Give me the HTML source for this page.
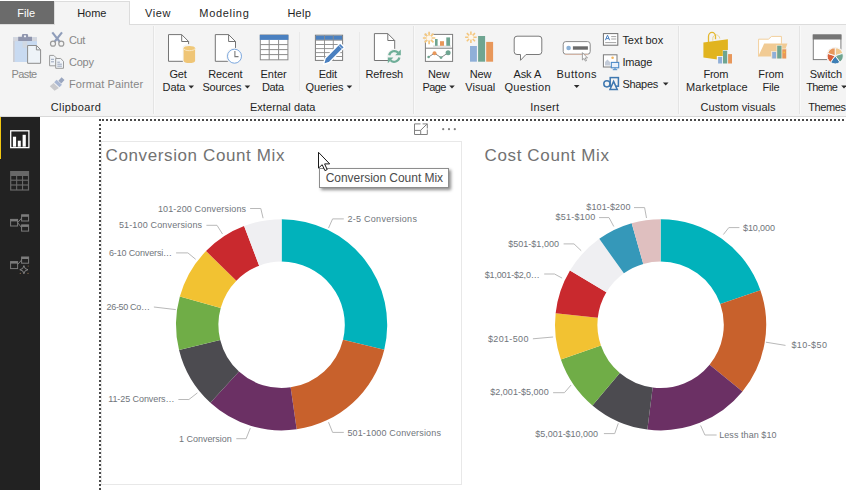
<!DOCTYPE html>
<html><head><meta charset="utf-8"><title>Power BI Desktop</title>
<style>
html,body{margin:0;padding:0;}
body{width:846px;height:490px;overflow:hidden;position:relative;background:#fff;font-family:"Liberation Sans", sans-serif;}
.t{position:absolute;white-space:nowrap;line-height:1;}
.abs{position:absolute;}
#tabbar{left:0;top:0;width:846px;height:24px;background:#fff;}
#ribbon{left:0;top:24px;width:846px;height:93px;background:#f4f4f4;border-top:1px solid #dcdcdc;border-bottom:1px solid #d9d9d9;box-sizing:border-box;}
#filetab{left:0;top:1px;width:54px;height:23px;background:#6b6b6b;}
#hometab{left:54px;top:1px;width:76px;height:24px;background:#f4f4f4;border:1px solid #dcdcdc;border-bottom:none;box-sizing:border-box;}
#side{left:0;top:117px;width:40px;height:373px;background:#222222;}
#sidesel{left:0;top:117px;width:1.2px;height:42px;background:#f2c811;}
.vsep{width:1px;background:#e3e3e3;}
svg{position:absolute;left:0;top:0;overflow:visible;}
svg text{font-family:"Liberation Sans", sans-serif;}
</style></head><body>
<div class="abs" id="tabbar"></div>
<div class="abs" id="ribbon"></div>
<div class="abs" id="filetab"></div>
<div class="abs" id="hometab"></div>
<div class="abs vsep" style="left:153px;top:26px;height:88px;background:#e4e4e4"></div>
<div class="abs vsep" style="left:154px;top:26px;height:88px;background:#f9f9f9"></div>
<div class="abs vsep" style="left:413px;top:26px;height:88px;background:#e4e4e4"></div>
<div class="abs vsep" style="left:414px;top:26px;height:88px;background:#f9f9f9"></div>
<div class="abs vsep" style="left:678px;top:26px;height:88px;background:#e4e4e4"></div>
<div class="abs vsep" style="left:679px;top:26px;height:88px;background:#f9f9f9"></div>
<div class="abs vsep" style="left:799px;top:26px;height:88px;background:#e4e4e4"></div>
<div class="abs vsep" style="left:800px;top:26px;height:88px;background:#f9f9f9"></div>
<div class="abs vsep" style="left:299px;top:32px;height:59px;background:#e9e9e9"></div>
<div class="abs vsep" style="left:359px;top:32px;height:59px;background:#e9e9e9"></div>
<div class="abs" id="side"></div>
<div class="abs" id="sidesel"></div>
<svg width="846" height="490" viewBox="0 0 846 490">
<!-- dotted selection guides -->
<rect x="99" y="119" width="2" height="2" fill="#4a4a4a"/>
<line x1="102" y1="120" x2="846" y2="120" stroke="#4a4a4a" stroke-width="2" stroke-dasharray="2 2"/>
<line x1="100" y1="124" x2="100" y2="490" stroke="#4a4a4a" stroke-width="2" stroke-dasharray="2 2"/>
<!-- visual border -->
<rect x="101.5" y="141.5" width="360" height="343" fill="none" stroke="#e8e8e8"/>
<path d="M281.60,219.20A105.6,105.6 0 0 1 384.24,349.63L343.03,339.66A63.2,63.2 0 0 0 281.60,261.60Z" fill="#01b2bb"/>
<path d="M384.24,349.63A105.6,105.6 0 0 1 296.66,429.32L290.61,387.35A63.2,63.2 0 0 0 343.03,339.66Z" fill="#c8612c"/>
<path d="M296.66,429.32A105.6,105.6 0 0 1 210.39,402.78L238.98,371.47A63.2,63.2 0 0 0 290.61,387.35Z" fill="#6b3064"/>
<path d="M210.39,402.78A105.6,105.6 0 0 1 179.05,349.99L220.22,339.88A63.2,63.2 0 0 0 238.98,371.47Z" fill="#4c4b50"/>
<path d="M179.05,349.99A105.6,105.6 0 0 1 179.84,296.58L220.70,307.91A63.2,63.2 0 0 0 220.22,339.88Z" fill="#70ad47"/>
<path d="M179.84,296.58A105.6,105.6 0 0 1 206.02,251.05L236.37,280.66A63.2,63.2 0 0 0 220.70,307.91Z" fill="#f2c232"/>
<path d="M206.02,251.05A105.6,105.6 0 0 1 244.10,226.08L259.16,265.72A63.2,63.2 0 0 0 236.37,280.66Z" fill="#c9292e"/>
<path d="M244.10,226.08A105.6,105.6 0 0 1 281.60,219.20L281.60,261.60A63.2,63.2 0 0 0 259.16,265.72Z" fill="#efeff2"/>

<path d="M660.60,219.20A105.6,105.6 0 0 1 760.39,290.25L720.32,304.12A63.2,63.2 0 0 0 660.60,261.60Z" fill="#01b2bb"/>
<path d="M760.39,290.25A105.6,105.6 0 0 1 742.43,391.54L709.58,364.74A63.2,63.2 0 0 0 720.32,304.12Z" fill="#c8612c"/>
<path d="M742.43,391.54A105.6,105.6 0 0 1 647.36,429.57L652.68,387.50A63.2,63.2 0 0 0 709.58,364.74Z" fill="#6b3064"/>
<path d="M647.36,429.57A105.6,105.6 0 0 1 592.44,405.46L619.81,373.07A63.2,63.2 0 0 0 652.68,387.50Z" fill="#4c4b50"/>
<path d="M592.44,405.46A105.6,105.6 0 0 1 560.87,359.53L600.92,345.58A63.2,63.2 0 0 0 619.81,373.07Z" fill="#70ad47"/>
<path d="M560.87,359.53A105.6,105.6 0 0 1 555.64,313.21L597.78,317.86A63.2,63.2 0 0 0 600.92,345.58Z" fill="#f2c232"/>
<path d="M555.64,313.21A105.6,105.6 0 0 1 569.99,270.57L606.37,292.34A63.2,63.2 0 0 0 597.78,317.86Z" fill="#c9292e"/>
<path d="M569.99,270.57A105.6,105.6 0 0 1 599.28,238.83L623.90,273.35A63.2,63.2 0 0 0 606.37,292.34Z" fill="#efeff2"/>
<path d="M599.28,238.83A105.6,105.6 0 0 1 631.67,223.24L643.29,264.02A63.2,63.2 0 0 0 623.90,273.35Z" fill="#3598b9"/>
<path d="M631.67,223.24A105.6,105.6 0 0 1 660.60,219.20L660.60,261.60A63.2,63.2 0 0 0 643.29,264.02Z" fill="#dfbfbf"/>

<g fill="none" stroke="#b9b9b9" stroke-width="1">
<polyline points="328.5,228.1 332.6,218.9 343.8,218.9"/>
<polyline points="328.5,422.2 332.6,432.4 343.8,432.4"/>
<polyline points="250.3,428.2 246.1,438.7 236.3,438.7"/>
<polyline points="197.4,392.9 188.9,399.5 178.4,399.5"/>
<polyline points="175.8,309.6 153.9,307"/>
<polyline points="195.7,259.3 187.9,252.9 176.1,252.9"/>
<polyline points="222.5,234 217,225.3 206.4,225.3"/>
<polyline points="263.1,218.2 260.8,208.5 250.1,208.5"/>

<polyline points="723.4,234.5 728.8,227.6 739.4,227.6"/>
<polyline points="765.9,342.2 785.5,345.4"/>
<polyline points="700.6,425.5 704.9,435 716.6,435"/>
<polyline points="618.3,423.3 614.7,433.6 603.9,433.6"/>
<polyline points="571.1,385 564.4,392.7 553.1,392.7"/>
<polyline points="553.1,337 532.9,338.8"/>
<polyline points="562.1,278.1 554.5,274 544.2,274"/>
<polyline points="581.2,250.7 574,243.9 563.6,243.9"/>
<polyline points="613.8,226.5 609,217.6 599,217.6"/>
<polyline points="646.5,218 644.6,207.6 634,207.6"/>

</g>
<g font-size="9px" fill="#6f6f6f" letter-spacing="0.3">


</g>
<!-- ===== Ribbon icons ===== -->
<g id="ic-paste">
  <rect x="13" y="37.2" width="24" height="24.8" fill="#c8daf1"/>
  <rect x="13" y="37.2" width="24" height="4" fill="#d3d6de"/>
  <rect x="13" y="41" width="1.7" height="21" fill="#cdced3"/>
  <rect x="22.6" y="41.2" width="4.6" height="6.6" fill="#d3d7df" opacity=".8"/>
  <path d="M18.2,36.8h3.7v-1.6q0-1.3 1.3-1.3h3.6q1.3,0 1.3,1.3v1.6h3.9v4.2h-13.8z" fill="#8f95ad"/>
  <circle cx="25" cy="36.3" r="1.1" fill="#f4f6fa"/>
  <path d="M27.6,45.5h9l4,4.2v13.6h-13z" fill="#eef3f8" stroke="#8c8c8c" stroke-width="1"/>
  <path d="M36.4,45.7v4.2h4" fill="none" stroke="#8c8c8c" stroke-width="1"/>
</g>
<g id="ic-cut" fill="none">
  <path d="M52.3,32.4L59.9,42" stroke="#8f9dba" stroke-width="2.1"/>
  <path d="M62,32.4L54.4,42" stroke="#8f9dba" stroke-width="2.1"/>
  <circle cx="53" cy="43.7" r="2.5" stroke="#9a9a9a" stroke-width="1.2"/>
  <circle cx="61.3" cy="43.7" r="2.5" stroke="#9a9a9a" stroke-width="1.2"/>
</g>
<g id="ic-copy" fill="#f1f4f8" stroke="#9b9b9b" stroke-width="1">
  <path d="M49.6,55.4h4.2l2.4,2.4v8h-6.6z"/>
  <path d="M55.7,58.5h5l2.8,2.8v7h-7.8z"/>
  <path d="M51,59.3h3M51,61.8h3M57.3,62.2h2.6M57.3,64.2h4.6M57.3,66.2h4.6" stroke="#9aa5bb" fill="none"/>
</g>
<g id="ic-fmt">
  <path d="M61.6,77.3l2.9,2.7l-3.2,3.4l-2.9,-2.7z" fill="#9aa6bf"/>
  <path d="M56.6,79.8l5.3,5l-2.4,2.5l-5.3,-5z" fill="#a9b7d3"/>
  <path d="M53.6,82.9l5.3,5l-4.3,2.8l-4.8,-4.4z" fill="#c9c9cc"/>
</g>
<g id="ic-getdata">
  <path d="M168.5,34.6h13.2l6.9,6.9v19.8h-20.1z" fill="#fff" stroke="#747474" stroke-width="1"/>
  <path d="M181.7,34.6v6.9h6.9" fill="none" stroke="#747474" stroke-width="1"/>
  <path d="M182.6,47.4v13.6a6.75,3.3 0 0 0 13.5,0v-13.6a6.75,3.3 0 0 0 -13.5,0z" fill="#f4f4f4"/>
  <path d="M183.6,48.2v12.6a5.75,2.3 0 0 0 11.5,0v-12.6z" fill="#efc576"/>
  <ellipse cx="189.35" cy="48.2" rx="5.75" ry="2.3" fill="#f0c878"/>
  <path d="M183.6,48.4a5.75,2.3 0 0 0 11.5,0" fill="none" stroke="#fbebc9" stroke-width=".9"/>
</g>
<g id="ic-recent">
  <path d="M215.3,34.6h13.3l6.9,6.9v19.8h-20.2z" fill="#fff" stroke="#747474" stroke-width="1"/>
  <path d="M228.6,34.6v6.9h6.9" fill="none" stroke="#747474" stroke-width="1"/>
  <circle cx="234.5" cy="56.2" r="8.5" fill="#f4f4f4"/>
  <circle cx="234.5" cy="56.2" r="7" fill="#fff" stroke="#7ba7de" stroke-width="1"/>
  <path d="M234.9,51v5.6h3.6" fill="none" stroke="#7a7a7a" stroke-width="1.1"/>
</g>
<g id="ic-enter">
  <rect x="260.3" y="35" width="27.6" height="24.8" fill="#fff" stroke="#8a8a8a" stroke-width="1"/>
  <path d="M269.2,40v19.8M278.6,40v19.8M260.3,44.6h27.6M260.3,49.6h27.6M260.3,54.6h27.6" stroke="#8a8a8a" stroke-width="1" fill="none"/>
  <rect x="259.8" y="34.9" width="28.6" height="5" fill="#4a80c0"/>
</g>
<g id="ic-edit">
  <rect x="315.4" y="35.2" width="27.2" height="25.2" fill="#fff" stroke="#7b7b7b" stroke-width="1"/>
  <rect x="315.9" y="35.7" width="26.2" height="4.2" fill="#4a80c0"/>
  <path d="M324.5,35.2v25.2M333.3,35.2v25.2M315.4,40.2h27.2M315.4,44.5h27.2M315.4,48.6h27.2M315.4,52.6h27.2M315.4,56.5h27.2" stroke="#8a8a8a" stroke-width=".9" fill="none"/>
  <path d="M340.1,42.9l4.4,4.4l-15.2,15.2l-5.8,1.8l1.6,-6z" fill="#4a80c0" stroke="#fff" stroke-width="1.4" stroke-linejoin="round"/>
  <path d="M338.2,44.9l4.3,4.3" stroke="#dfe8f5" stroke-width=".8"/>
</g>
<g id="ic-refresh">
  <path d="M374.4,33.6h13.4l6.9,6.9v20h-20.3z" fill="#fff" stroke="#747474" stroke-width="1"/>
  <path d="M387.8,33.6v6.9h6.9" fill="none" stroke="#747474" stroke-width="1"/>
  <circle cx="394.3" cy="56.4" r="7.6" fill="#f4f4f4"/>
  <path d="M389.2,55.2a5.3,5.3 0 0 1 8.9,-2.6" fill="none" stroke="#6fae98" stroke-width="2.2"/>
  <path d="M399.4,57.6a5.3,5.3 0 0 1 -8.9,2.6" fill="none" stroke="#6fae98" stroke-width="2.2"/>
  <path d="M400.8,49.6v5.6h-5.6z" fill="#6fae98"/>
  <path d="M387.8,63.2v-5.6h5.6z" fill="#6fae98"/>
</g>
<g id="ic-newpage">
  <rect x="425.4" y="34.4" width="27.2" height="27" fill="#fff" stroke="#7d7d7d" stroke-width="1"/>
  <path d="M425.4,48.2h27.2" stroke="#7d7d7d" stroke-width="1"/>
  <path d="M433,46.1h18" stroke="#b5b5b5" stroke-width=".6"/>
  <rect x="435" y="39" width="2.6" height="6.8" fill="#6fa591"/>
  <rect x="440" y="41.2" width="4" height="4.6" fill="#e8975a"/>
  <rect x="446.3" y="37.4" width="3.8" height="8.4" fill="#6fa591"/>
  <path d="M428.6,57l5.9,-3.8l6.5,4.4l7.1,-4.8" fill="none" stroke="#8a8a8a" stroke-width="1"/>
  <circle cx="428.6" cy="57" r="1.3" fill="#6fa591"/>
  <circle cx="434.5" cy="53.2" r="2" fill="#e8975a"/>
  <circle cx="441" cy="57.6" r="1.4" fill="#6fa591"/>
  <circle cx="448.1" cy="52.8" r="2.5" fill="#6fa591"/>
  <g transform="translate(429.1 38)"><circle r="4.6" fill="#f4f4f4"/><g stroke="#f4c77f" stroke-width="1.7"><path d="M0,-6.2V6.2M-6.2,0H6.2M-4.4,-4.4L4.4,4.4M-4.4,4.4L4.4,-4.4"/></g><circle r="2.6" fill="#fdf6ea"/></g>
</g>
<g id="ic-newvisual">
  <rect x="470" y="46" width="6.9" height="15.7" fill="#8fafd8"/>
  <rect x="478.1" y="36" width="7" height="25.7" fill="#6fa591"/>
  <rect x="486.2" y="41.9" width="6.9" height="19.8" fill="#e8975a"/>
  <g transform="translate(470.9 37.2)"><g stroke="#f4c77f" stroke-width="1.6"><path d="M0,-5.8V5.8M-5.8,0H5.8M-4.1,-4.1L4.1,4.1M-4.1,4.1L4.1,-4.1"/></g><circle r="2.5" fill="#fdf6ea"/></g>
</g>
<g id="ic-ask">
  <path d="M517,36.2h22a2.8,2.8 0 0 1 2.8,2.8v12.7a2.8,2.8 0 0 1 -2.8,2.8h-13l-5.5,5.8v-5.8h-3.5a2.8,2.8 0 0 1 -2.8,-2.8v-12.7a2.8,2.8 0 0 1 2.8,-2.8z" fill="#fff" stroke="#7a7a7a" stroke-width="1"/>
</g>
<g id="ic-buttons">
  <rect x="563.2" y="41.6" width="27" height="12.6" rx="2.6" fill="#fff" stroke="#8a8a8a" stroke-width="1"/>
  <path d="M565,54.4h23" stroke="#e9b9a0" stroke-width=".7"/>
  <circle cx="568.6" cy="48" r="2.3" fill="#8ab0d6"/>
  <rect x="572.9" y="46.3" width="15" height="3.4" fill="#6b6b6b"/>
  <path d="M582.4,52.6v7.4l1.7,-1.6l1.3,2.7l1.1,-.5l-1.3,-2.7h2.3z" fill="#fff" stroke="#8a8a8a" stroke-width=".8"/>
  <path d="M573.9,85h5.6l-2.8,3z" fill="#2b2b2b"/>
</g>
<g id="ic-textbox">
  <rect x="603.4" y="33.6" width="14.4" height="11.6" fill="#fff" stroke="#707070" stroke-width="1"/>
  <path d="M605.4,40.2l2.1,-5l2.1,5M606.2,38.6h2.7" fill="none" stroke="#4a80c0" stroke-width="1"/>
  <path d="M611.2,36.6h5M611.2,39h5M605.2,42.6h11" stroke="#9a9a9a" stroke-width=".9"/>
</g>
<g id="ic-image">
  <rect x="603.4" y="54.8" width="13.6" height="12.2" fill="#fff" stroke="#7a7a7a" stroke-width="1"/>
  <path d="M605,65.6v-3.6l2.4,-2.6l2.6,2.6v3.6z" fill="#c3cbd8"/>
  <circle cx="612.6" cy="57.8" r="1.3" fill="#f3b35a"/>
  <rect x="611.3" y="62.4" width="7.4" height="5.4" fill="#e8f1fb" stroke="#4a8ac8" stroke-width="1.1"/>
  <path d="M615,67.8v1.6M612.8,69.7h4.4" stroke="#4a8ac8" stroke-width="1"/>
</g>
<g id="ic-shapes" fill="none" stroke="#3f78b0" stroke-width="1.5">
  <rect x="610.2" y="77.6" width="8.2" height="8.6" fill="#f4f4f4"/>
  <circle cx="606.9" cy="83.8" r="3.1"/>
  <path d="M613.6,81.4l3.6,8h-7.2z" fill="#f4f4f4"/>
  <path d="M662.9,82.6h5.6l-2.8,3z" fill="#2b2b2b" stroke="none"/>
</g>
<g id="ic-market">
  <path d="M712.8,40.6v-2.4c.2,-3.6 4.8,-4.6 6.6,-1.2l.4,1.6" fill="none" stroke="#ecd690" stroke-width="1"/>
  <path d="M708.5,42v-5.4a3.5,4.2 0 0 1 7,0v2.6" fill="none" stroke="#e4b830" stroke-width="1.3"/>
  <path d="M703.4,42.5l24.5,-3.2v21.7l-24.5,-3.6z" fill="#e1b41f"/>
  <path d="M716.8,63.6v-7.6h6v-6h6v3.4h4.2v10.2z" fill="#f4f4f4"/>
  <rect x="718.1" y="56.9" width="4" height="6.6" fill="#8fafd8"/>
  <rect x="723" y="50.7" width="4.2" height="12.8" fill="#6fa591"/>
  <rect x="728.1" y="54.1" width="3.9" height="9.4" fill="#e8975a"/>
</g>
<g id="ic-fromfile">
  <path d="M758.6,56.4v-17.2h9.8l3.2,-2.8h9.8v7.4" fill="#fff" stroke="#f2cf9c" stroke-width="1"/>
  <path d="M758.2,56.6l6,-13h23.2l-4.4,13z" fill="#f1cb94"/>
  <path d="M771,58.6v-7.6h5.4v-6h5.8v3.4h4.6v10.2z" fill="#f6e6cf"/>
  <rect x="772.2" y="51.9" width="3.9" height="6.6" fill="#8fafd8"/>
  <rect x="777.2" y="45.7" width="4.3" height="12.8" fill="#6fa591"/>
  <rect x="782.3" y="49.3" width="3.8" height="9.2" fill="#e8975a"/>
  <rect x="783.4" y="51.6" width="1.6" height="1.6" fill="#f6c33c"/>
</g>
<g id="ic-theme">
  <rect x="813.3" y="35" width="27.6" height="24.6" fill="#fff" stroke="#7d7d7d" stroke-width="1"/>
  <rect x="812.8" y="34.5" width="28.6" height="5" fill="#757575"/>
  <circle cx="835.2" cy="55.8" r="9" fill="#f8f8f8"/>
  <g transform="translate(835.2 55.8)" stroke="#f8f8f8" stroke-width="1">
    <path d="M0,0L0,-8A8,8 0 0 1 7.61,-2.47Z" fill="#f0c88f"/>
    <path d="M0,0L7.61,-2.47A8,8 0 0 1 4.7,6.47Z" fill="#6fa591"/>
    <path d="M0,0L4.7,6.47A8,8 0 0 1 -4.7,6.47Z" fill="#3f7fb5"/>
    <path d="M0,0L-4.7,6.47A8,8 0 0 1 -7.61,-2.47Z" fill="#d9603a"/>
    <path d="M0,0L-7.61,-2.47A8,8 0 0 1 0,-8Z" fill="#e8975a"/>
  </g>
</g>
<!-- dropdown arrows beside text -->
<g fill="#2b2b2b">
  <path d="M188.4,85.5h5.6l-2.8,3z"/>
  <path d="M244.6,85.5h5.6l-2.8,3z"/>
  <path d="M346.6,85.5h5.6l-2.8,3z"/>
  <path d="M449.2,85.5h5.6l-2.8,3z"/>
  <path d="M841.2,85.5h5.6l-2.8,3z"/>
</g>
<!-- ===== Sidebar icons ===== -->
<g id="sb-report">
  <rect x="10.7" y="130.8" width="18.2" height="16.8" fill="none" stroke="#fff" stroke-width="1.3"/>
  <rect x="12.9" y="136.7" width="3.2" height="10" fill="#fff"/>
  <rect x="17.8" y="140.7" width="3" height="6" fill="#fff"/>
  <rect x="22.6" y="134.8" width="3.2" height="11.9" fill="#fff"/>
</g>
<g id="sb-data">
  <rect x="10.1" y="171" width="19" height="19.6" fill="#686868"/>
  <g fill="#222">
   <rect x="11.3" y="176" width="4.8" height="3.6"/><rect x="17.2" y="176" width="4.8" height="3.6"/><rect x="23.1" y="176" width="4.8" height="3.6"/>
   <rect x="11.3" y="180.8" width="4.8" height="3.6"/><rect x="17.2" y="180.8" width="4.8" height="3.6"/><rect x="23.1" y="180.8" width="4.8" height="3.6"/>
   <rect x="11.3" y="185.6" width="4.8" height="3.8"/><rect x="17.2" y="185.6" width="4.8" height="3.8"/><rect x="23.1" y="185.6" width="4.8" height="3.8"/>
  </g>
</g>
<g id="sb-model" fill="none" stroke="#7c7c7c" stroke-width="1">
  <rect x="10.6" y="219.4" width="7" height="6.6"/><path d="M10.6,220.4h7" stroke-width="2"/>
  <rect x="21.6" y="214.8" width="7" height="6.2"/><path d="M21.6,215.8h7" stroke-width="2"/>
  <rect x="21.6" y="224.9" width="7" height="6.2"/><path d="M21.6,225.9h7" stroke-width="2"/>
  <path d="M17.6,222.7l4,-4.6M17.6,222.7l4,4.8"/>
</g>
<g id="sb-model2" fill="none" stroke="#7c7c7c" stroke-width="1">
  <rect x="10.6" y="261.6" width="7" height="7"/><path d="M10.6,262.6h7" stroke-width="2"/>
  <rect x="21.6" y="257" width="7" height="6.2"/><path d="M21.6,258h7" stroke-width="2"/>
  <path d="M17.6,264.6l4,-4.6"/>
  <path d="M23.9,265.6l1.2,2.9l2.9,1.2l-2.9,1.2l-1.2,2.9l-1.2,-2.9l-2.9,-1.2l2.9,-1.2z" stroke="#8a8a8a" stroke-width=".9"/>
  <g fill="#8a6a4a" stroke="none"><circle cx="20.3" cy="273.4" r=".6"/><circle cx="28" cy="273.4" r=".6"/><circle cx="28.2" cy="266" r=".6"/></g>
</g>
<!-- ===== Canvas bits ===== -->
<g id="focus" fill="none" stroke="#808080" stroke-width="1">
  <path d="M420.5,123.9h-6v10.6h12.8v-5"/>
  <path d="M414.5,130.4h6.2v4.1"/>
  <path d="M420.6,130.3l6.6,-6.4M422.6,123.9h4.7v4.6"/>
</g>
<g fill="#808080"><circle cx="443.2" cy="129.2" r="1.1"/><circle cx="449" cy="129.2" r="1.1"/><circle cx="454.8" cy="129.2" r="1.1"/></g>

</svg>
<div class="abs" style="left:319px;top:168px;width:130px;height:20px;box-sizing:border-box;border:1px solid #8d8d8d;background:#fff;box-shadow:2px 2px 3px rgba(0,0,0,.45);"></div>
<span class="t" id="t0" style="left:17.2px;top:8.29px;font-size:11px;color:#ffffff;letter-spacing:0.055px;">File</span>
<span class="t" id="t1" style="left:77.2px;top:8.29px;font-size:11px;color:#1f1f1f;letter-spacing:-0.015px;">Home</span>
<span class="t" id="t2" style="left:145px;top:8.29px;font-size:11px;color:#1f1f1f;letter-spacing:0.581px;">View</span>
<span class="t" id="t3" style="left:199.3px;top:8.29px;font-size:11px;color:#1f1f1f;letter-spacing:0.694px;">Modeling</span>
<span class="t" id="t4" style="left:287.4px;top:8.29px;font-size:11px;color:#1f1f1f;letter-spacing:0.258px;">Help</span>
<span class="t" id="t5" style="left:11.6px;top:69.09px;font-size:11px;color:#878787;letter-spacing:-0.635px;">Paste</span>
<span class="t" id="t6" style="left:68.9px;top:35.29px;font-size:11px;color:#878787;letter-spacing:-0.363px;">Cut</span>
<span class="t" id="t7" style="left:68.9px;top:57.09px;font-size:11px;color:#878787;letter-spacing:-0.196px;">Copy</span>
<span class="t" id="t8" style="left:68.9px;top:79.09px;font-size:11px;color:#878787;letter-spacing:0.112px;">Format Painter</span>
<span class="t" id="t9" style="left:50.8px;top:101.79px;font-size:11px;color:#1f1f1f;letter-spacing:0.376px;">Clipboard</span>
<span class="t" id="t10" style="left:169.4px;top:69.29px;font-size:11px;color:#1f1f1f;letter-spacing:-0.117px;">Get</span>
<span class="t" id="t11" style="left:162.6px;top:82.09px;font-size:11px;color:#1f1f1f;letter-spacing:-0.117px;">Data</span>
<span class="t" id="t12" style="left:208.2px;top:69.29px;font-size:11px;color:#1f1f1f;letter-spacing:-0.072px;">Recent</span>
<span class="t" id="t13" style="left:202.4px;top:82.09px;font-size:11px;color:#1f1f1f;letter-spacing:-0.210px;">Sources</span>
<span class="t" id="t14" style="left:260.5px;top:69.29px;font-size:11px;color:#1f1f1f;letter-spacing:-0.024px;">Enter</span>
<span class="t" id="t15" style="left:261.9px;top:82.09px;font-size:11px;color:#1f1f1f;letter-spacing:-0.317px;">Data</span>
<span class="t" id="t16" style="left:318.7px;top:69.29px;font-size:11px;color:#1f1f1f;letter-spacing:-0.190px;">Edit</span>
<span class="t" id="t17" style="left:305.5px;top:82.09px;font-size:11px;color:#1f1f1f;letter-spacing:-0.089px;">Queries</span>
<span class="t" id="t18" style="left:365.6px;top:69.29px;font-size:11px;color:#1f1f1f;letter-spacing:-0.172px;">Refresh</span>
<span class="t" id="t19" style="left:249.9px;top:101.79px;font-size:11px;color:#1f1f1f;letter-spacing:0.064px;">External data</span>
<span class="t" id="t20" style="left:428px;top:69.29px;font-size:11px;color:#1f1f1f;letter-spacing:-0.108px;">New</span>
<span class="t" id="t21" style="left:422.6px;top:82.09px;font-size:11px;color:#1f1f1f;letter-spacing:-0.601px;">Page</span>
<span class="t" id="t22" style="left:469.7px;top:69.29px;font-size:11px;color:#1f1f1f;letter-spacing:-0.108px;">New</span>
<span class="t" id="t23" style="left:465.3px;top:82.09px;font-size:11px;color:#1f1f1f;letter-spacing:0.047px;">Visual</span>
<span class="t" id="t24" style="left:513.4px;top:69.29px;font-size:11px;color:#1f1f1f;letter-spacing:-0.056px;">Ask A</span>
<span class="t" id="t25" style="left:504.5px;top:82.09px;font-size:11px;color:#1f1f1f;letter-spacing:0.296px;">Question</span>
<span class="t" id="t26" style="left:556.5px;top:69.29px;font-size:11px;color:#1f1f1f;letter-spacing:0.465px;">Buttons</span>
<span class="t" id="t27" style="left:622.4px;top:35.29px;font-size:11px;color:#1f1f1f;letter-spacing:-0.024px;">Text box</span>
<span class="t" id="t28" style="left:622.4px;top:57.09px;font-size:11px;color:#1f1f1f;letter-spacing:-0.120px;">Image</span>
<span class="t" id="t29" style="left:622.4px;top:79.09px;font-size:11px;color:#1f1f1f;letter-spacing:-0.283px;">Shapes</span>
<span class="t" id="t30" style="left:530.2px;top:101.79px;font-size:11px;color:#1f1f1f;letter-spacing:0.257px;">Insert</span>
<span class="t" id="t31" style="left:703.5px;top:69.29px;font-size:11px;color:#1f1f1f;letter-spacing:-0.291px;">From</span>
<span class="t" id="t32" style="left:686px;top:82.09px;font-size:11px;color:#1f1f1f;letter-spacing:0.178px;">Marketplace</span>
<span class="t" id="t33" style="left:758.3px;top:69.29px;font-size:11px;color:#1f1f1f;letter-spacing:-0.124px;">From</span>
<span class="t" id="t34" style="left:762.6px;top:82.09px;font-size:11px;color:#1f1f1f;letter-spacing:-0.211px;">File</span>
<span class="t" id="t35" style="left:700.5px;top:101.79px;font-size:11px;color:#1f1f1f;letter-spacing:0.040px;">Custom visuals</span>
<span class="t" id="t36" style="left:809.7px;top:69.29px;font-size:11px;color:#1f1f1f;letter-spacing:-0.001px;">Switch</span>
<span class="t" id="t37" style="left:806.2px;top:82.09px;font-size:11px;color:#1f1f1f;letter-spacing:-0.613px;">Theme</span>
<span class="t" id="t38" style="left:808.2px;top:101.79px;font-size:11px;color:#1f1f1f;letter-spacing:-0.390px;">Themes</span>
<span class="t" id="t39" style="left:105.5px;top:146.61px;font-size:17px;color:#727272;letter-spacing:0.618px;">Conversion Count Mix</span>
<span class="t" id="t40" style="left:484.5px;top:146.61px;font-size:17px;color:#727272;letter-spacing:0.638px;">Cost Count Mix</span>
<span class="t" id="t41" style="left:325.7px;top:171.84px;font-size:12px;color:#4a4a4a;letter-spacing:-0.035px;">Conversion Count Mix</span>
<span class="t" id="t42" style="left:347.4px;top:214.68px;font-size:9px;color:#70757b;letter-spacing:0.283px;">2-5 Conversions</span>
<span class="t" id="t43" style="left:347.4px;top:428.68px;font-size:9px;color:#70757b;letter-spacing:0.155px;">501-1000 Conversions</span>
<span class="t" id="t44" style="left:179.1px;top:434.68px;font-size:9px;color:#70757b;letter-spacing:-0.039px;">1 Conversion</span>
<span class="t" id="t45" style="left:108.2px;top:395.38px;font-size:9px;color:#70757b;letter-spacing:-0.083px;">11-25 Convers…</span>
<span class="t" id="t46" style="left:106.5px;top:303.28px;font-size:9px;color:#70757b;letter-spacing:-0.316px;">26-50 Co…</span>
<span class="t" id="t47" style="left:109px;top:249.18px;font-size:9px;color:#70757b;letter-spacing:-0.149px;">6-10 Conversi…</span>
<span class="t" id="t48" style="left:118.9px;top:221.48px;font-size:9px;color:#70757b;letter-spacing:0.155px;">51-100 Conversions</span>
<span class="t" id="t49" style="left:157.9px;top:204.68px;font-size:9px;color:#70757b;letter-spacing:0.147px;">101-200 Conversions</span>
<span class="t" id="t50" style="left:743.1px;top:224.48px;font-size:9px;color:#70757b;letter-spacing:-0.124px;">$10,000</span>
<span class="t" id="t51" style="left:791.4px;top:341.18px;font-size:9px;color:#70757b;letter-spacing:0.411px;">$10-$50</span>
<span class="t" id="t52" style="left:719.2px;top:430.88px;font-size:9px;color:#70757b;letter-spacing:0.063px;">Less than $10</span>
<span class="t" id="t53" style="left:535.2px;top:429.88px;font-size:9px;color:#70757b;letter-spacing:-0.013px;">$5,001-$10,000</span>
<span class="t" id="t54" style="left:490.2px;top:388.08px;font-size:9px;color:#70757b;letter-spacing:0.036px;">$2,001-$5,000</span>
<span class="t" id="t55" style="left:488px;top:334.58px;font-size:9px;color:#70757b;letter-spacing:0.336px;">$201-500</span>
<span class="t" id="t56" style="left:484.8px;top:270.78px;font-size:9px;color:#70757b;letter-spacing:-0.195px;">$1,001-$2,0…</span>
<span class="t" id="t57" style="left:508.2px;top:240.18px;font-size:9px;color:#70757b;letter-spacing:0.025px;">$501-$1,000</span>
<span class="t" id="t58" style="left:555.5px;top:213.08px;font-size:9px;color:#70757b;letter-spacing:0.236px;">$51-$100</span>
<span class="t" id="t59" style="left:586.3px;top:203.08px;font-size:9px;color:#70757b;letter-spacing:0.132px;">$101-$200</span>

<svg width="846" height="490" viewBox="0 0 846 490"><g id="cursor" transform="translate(318.5 152.3)">
  <path d="M0,0V15.8L3.7,12.4L6.4,18.3L8.7,17.3L6.1,11.6H11.2Z" fill="#fff" stroke="#1a1a1a" stroke-width="1" stroke-linejoin="miter"/>
</g>
</svg>
</body></html>
